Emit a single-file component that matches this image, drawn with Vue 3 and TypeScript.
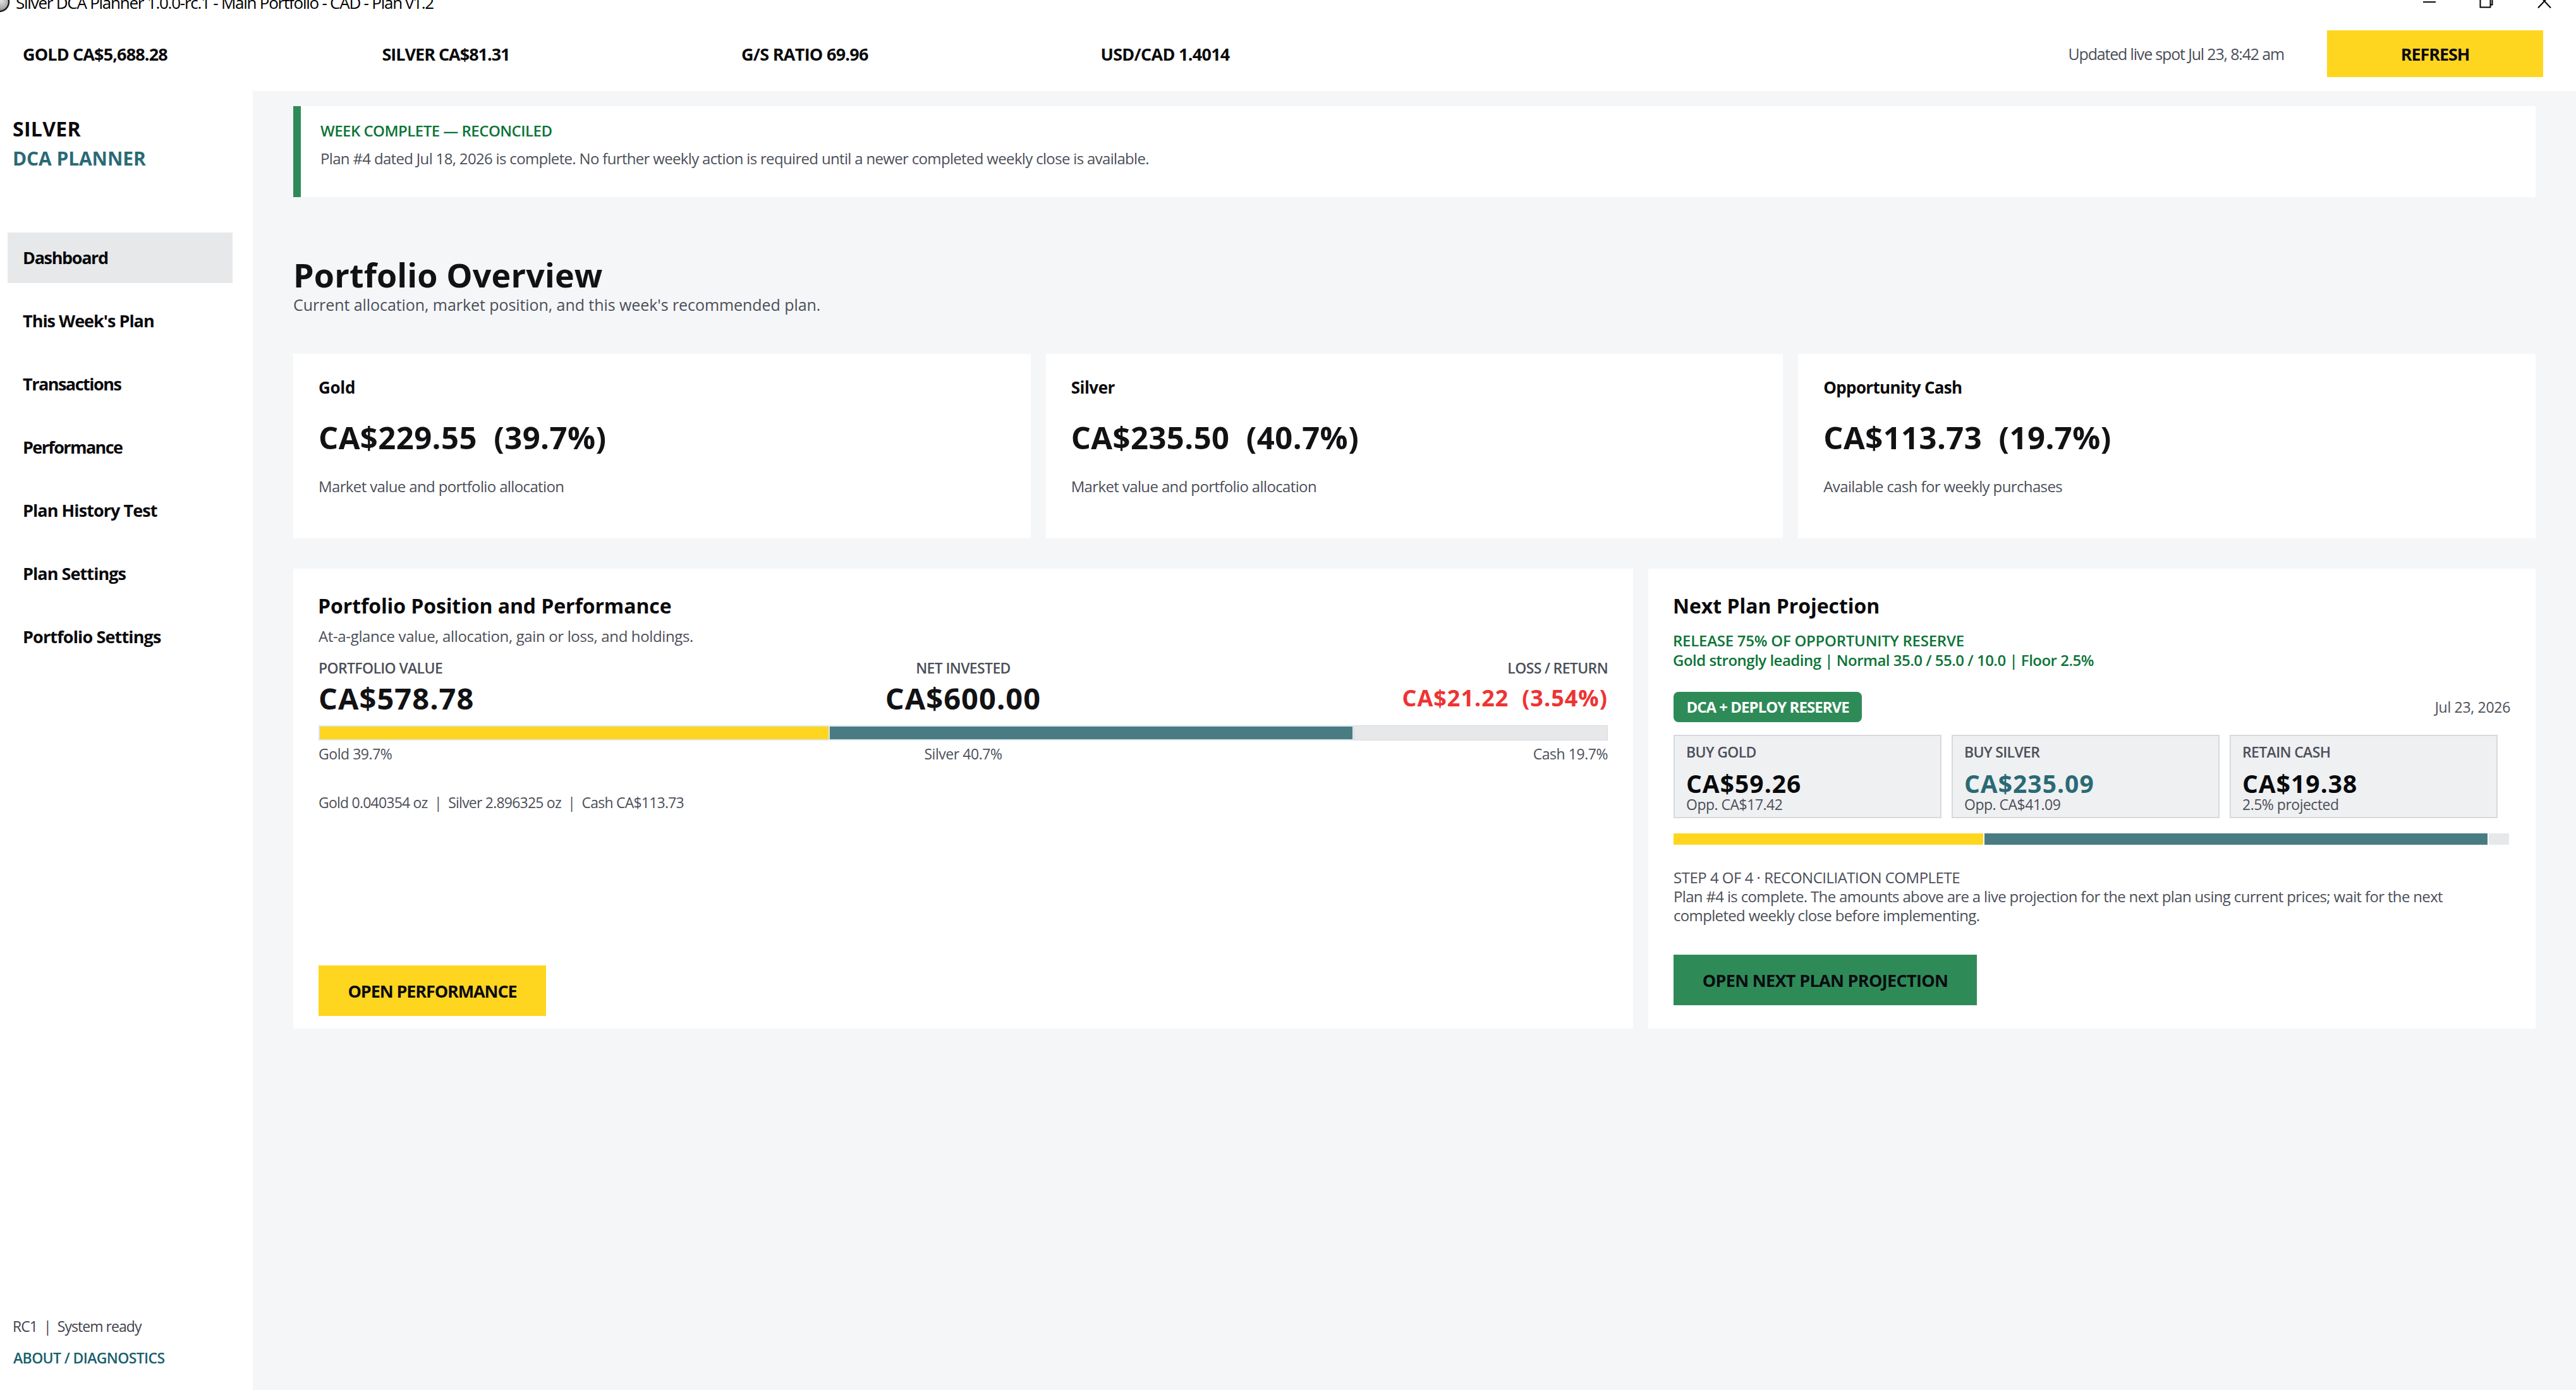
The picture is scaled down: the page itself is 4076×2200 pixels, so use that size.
<script setup lang="ts">
interface Item { text: string; track: number }
interface Segment { kind: 'gold' | 'silver' | 'cash'; share: number }

const quotes: Item[] = [
  { text: 'GOLD CA$5,688.28', track: -0.86 },
  { text: 'SILVER CA$81.31', track: -1.02 },
  { text: 'G/S RATIO 69.96', track: -0.72 },
  { text: 'USD/CAD 1.4014', track: -0.72 },
]

const nav: Item[] = [
  { text: 'Dashboard', track: -1.35 },
  { text: "This Week's Plan", track: -1 },
  { text: 'Transactions', track: -1.5 },
  { text: 'Performance', track: -1.6 },
  { text: 'Plan History Test', track: -0.93 },
  { text: 'Plan Settings', track: -0.93 },
  { text: 'Portfolio Settings', track: -0.86 },
]

const holdings = [
  { name: 'Gold', track: -0.3, value: 'CA$229.55\u00a0 (39.7%)', note: 'Market value and portfolio allocation' },
  { name: 'Silver', track: -0.5, value: 'CA$235.50\u00a0 (40.7%)', note: 'Market value and portfolio allocation' },
  { name: 'Opportunity Cash', track: -0.68, value: 'CA$113.73\u00a0 (19.7%)', note: 'Available cash for weekly purchases' },
]

const purchases = [
  { label: 'BUY GOLD', value: 'CA$59.26', note: 'Opp. CA$17.42', accent: false },
  { label: 'BUY SILVER', value: 'CA$235.09', note: 'Opp. CA$41.09', accent: true },
  { label: 'RETAIN CASH', value: 'CA$19.38', note: '2.5% projected', accent: false },
]

const allocation: Segment[] = [
  { kind: 'gold', share: 806 },
  { kind: 'silver', share: 828 },
  { kind: 'cash', share: 400 },
]
const projection: Segment[] = [
  { kind: 'gold', share: 490 },
  { kind: 'silver', share: 796 },
  { kind: 'cash', share: 32 },
]
</script>

<template>
  <div class="window">
    <header class="top">
      <div class="titlebar">
        <svg class="coin" width="18" height="22" viewBox="0 0 18 22">
          <defs>
            <radialGradient id="coin" cx="0.6" cy="0.45" r="0.6">
              <stop offset="0" stop-color="#e2e2e2" />
              <stop offset="0.65" stop-color="#a9a9a9" />
              <stop offset="1" stop-color="#6d6d6d" />
            </radialGradient>
          </defs>
          <circle cx="-1" cy="3" r="15" fill="url(#coin)" stroke="#1c1c1c" stroke-width="2.4" />
        </svg>
        <span class="title">Silver DCA Planner 1.0.0-rc.1 - Main Portfolio - CAD - Plan v1.2</span>
        <svg class="controls" width="204" height="18" viewBox="0 0 204 18" fill="none" stroke="#000" stroke-width="2">
          <path d="M0 3.2H20" />
          <path d="M90.5 -6V11.5H106.500V-6M109.500 -6V7.500H106.500" />
          <path d="M182 12.500L202 -9M202 12.500L182 -9" />
        </svg>
      </div>
      <div class="ticker">
        <span v-for="q in quotes" :key="q.text" class="quote" :style="{ letterSpacing: q.track + 'px' }">{{ q.text }}</span>
        <span class="updated">Updated live spot Jul 23, 8:42 am</span>
        <button class="btn refresh">REFRESH</button>
      </div>
    </header>

    <div class="body">
      <aside class="side">
        <div class="brand">SILVER</div>
        <div class="brand-sub">DCA PLANNER</div>
        <nav class="nav">
          <a v-for="(n, i) in nav" :key="n.text" :class="['nav-item', { active: i === 0 }]" :style="{ letterSpacing: n.track + 'px' }">{{ n.text }}</a>
        </nav>
        <div class="status">RC1&nbsp; |&nbsp; System ready</div>
        <a class="about">ABOUT / DIAGNOSTICS</a>
      </aside>

      <main class="main">
        <section class="banner">
          <div class="banner-title">WEEK COMPLETE — RECONCILED</div>
          <div class="banner-text">Plan #4 dated Jul 18, 2026 is complete. No further weekly action is required until a newer completed weekly close is available.</div>
        </section>

        <h1>Portfolio Overview</h1>
        <p class="lead">Current allocation, market position, and this week's recommended plan.</p>

        <section class="cards">
          <article v-for="h in holdings" :key="h.name" class="card">
            <div class="card-name" :style="{ letterSpacing: h.track + 'px' }">{{ h.name }}</div>
            <div class="card-value">{{ h.value }}</div>
            <div class="card-note">{{ h.note }}</div>
          </article>
        </section>

        <section class="panels">
          <article class="panel position">
            <h2>Portfolio Position and Performance</h2>
            <p class="hint">At-a-glance value, allocation, gain or loss, and holdings.</p>
            <div class="trio labels">
              <span>PORTFOLIO VALUE</span><span>NET INVESTED</span><span>LOSS / RETURN</span>
            </div>
            <div class="trio values">
              <span>CA$578.78</span><span>CA$600.00</span><span class="loss">CA$21.22&nbsp; (3.54%)</span>
            </div>
            <div class="bar framed">
              <i v-for="s in allocation" :key="s.kind" :class="s.kind" :style="{ flexGrow: s.share }"></i>
            </div>
            <div class="trio shares">
              <span>Gold 39.7%</span><span>Silver 40.7%</span><span>Cash 19.7%</span>
            </div>
            <div class="ounces">Gold 0.040354 oz&nbsp; |&nbsp; Silver 2.896325 oz&nbsp; |&nbsp; Cash CA$113.73</div>
            <button class="btn perf">OPEN PERFORMANCE</button>
          </article>

          <article class="panel next">
            <h2 class="h2-next">Next Plan Projection</h2>
            <div class="signal">
              <div class="release">RELEASE 75% OF OPPORTUNITY RESERVE</div>
              <div>Gold strongly leading | Normal 35.0 / 55.0 / 10.0 | Floor 2.5%</div>
            </div>
            <div class="mode">
              <span class="badge">DCA + DEPLOY RESERVE</span>
              <span class="date">Jul 23, 2026</span>
            </div>
            <div class="boxes">
              <div v-for="p in purchases" :key="p.label" class="box">
                <div class="box-label">{{ p.label }}</div>
                <div :class="['box-value', { accent: p.accent }]">{{ p.value }}</div>
                <div class="box-note">{{ p.note }}</div>
              </div>
            </div>
            <div class="bar slim">
              <i v-for="s in projection" :key="s.kind" :class="s.kind" :style="{ flexGrow: s.share }"></i>
            </div>
            <div class="step">
              <div class="step-title">STEP 4 OF 4 · RECONCILIATION COMPLETE</div>
              <div>Plan #4 is complete. The amounts above are a live projection for the next plan using current prices; wait for the next<br />completed weekly close before implementing.</div>
            </div>
            <button class="btn open-next">OPEN NEXT PLAN PROJECTION</button>
          </article>
        </section>
      </main>
    </div>
  </div>
</template>

<style>
body { margin: 0; background: #fff; }
</style>

<style scoped>
* { box-sizing: border-box; }
h1, h2, p { margin: 0; }
.window {
  width: 4076px; height: 2200px; overflow: hidden;
  display: flex; flex-direction: column;
  font-family: "Open Sans", "Noto Sans", sans-serif;
  color: #0a0a0c; background: #fff; white-space: nowrap;
}
.top { height: 144px; flex: none; }
.titlebar { height: 48px; display: flex; align-items: flex-start; overflow: hidden; }
.coin { flex: none; }
.title { margin: -14px 0 0 7px; font-size: 26px; line-height: 36px; letter-spacing: -1.24px; color: #000; }
.controls { margin-left: auto; margin-right: 38px; }
.ticker { height: 74px; display: flex; align-items: center; padding: 0 52px 0 36px; font-size: 27px; }
.quote { width: 568.5px; font-weight: 700; }
.updated { margin-left: auto; margin-right: 68px; font-size: 25px; letter-spacing: -1.17px; color: #4c4f59; }
.btn {
  border: 0; padding: 0; font-family: inherit; font-size: 27px; font-weight: 700;
  color: #0b0b12; background: #ffd61f; display: block; flex: none;
}
.refresh { width: 342px; height: 74px; letter-spacing: -1.1px; }

.body { flex: 1; display: flex; min-height: 0; }
.side { width: 400px; flex: none; display: flex; flex-direction: column; padding: 40px 0 35px; }
.brand { padding-left: 20px; font-size: 32px; line-height: 40px; font-weight: 700; letter-spacing: 0.3px; }
.brand-sub { padding-left: 20px; margin-top: 7px; font-size: 30px; line-height: 40px; font-weight: 700; letter-spacing: -0.1px; color: #2a6a75; }
.nav { margin: 97px 32px 0 12px; display: flex; flex-direction: column; gap: 20px; }
.nav-item { height: 80px; line-height: 80px; padding-left: 24px; font-size: 27px; font-weight: 700; }
.nav-item.active { background: #e7e8ea; }
.status { margin-top: auto; padding-left: 20px; font-size: 23px; line-height: 32px; letter-spacing: -0.95px; color: #3f424d; }
.about { margin-top: 18px; padding-left: 21px; font-size: 23px; line-height: 32px; font-weight: 600; letter-spacing: -0.62px; color: #17606c; }

.main { flex: 1; background: #f5f6f8; padding: 24px 64px 0 64px; }
.banner { height: 144px; background: #fff; border-left: 12px solid #2e8b57; padding: 23px 0 0 31px; }
.banner-title { font-size: 24px; line-height: 32px; font-weight: 600; letter-spacing: -0.52px; color: #0b7437; }
.banner-text { margin-top: 12px; font-size: 24px; line-height: 32px; letter-spacing: -0.67px; color: #4c4f59; }
h1 { margin-top: 93px; font-size: 52px; line-height: 60px; font-weight: 700; letter-spacing: 0.15px; color: #121214; }
.lead { margin-top: 1px; font-size: 25px; line-height: 32px; letter-spacing: -0.07px; color: #4c4f59; }

.cards { margin-top: 62px; display: grid; grid-template-columns: repeat(3, 1fr); gap: 24px; }
.card { height: 292px; background: #fff; padding: 35px 40px 0; }
.card-name { font-size: 26px; line-height: 36px; font-weight: 700; }
.card-value { margin: 31px 0 32px; font-size: 49px; line-height: 60px; font-weight: 700; letter-spacing: 0.42px; color: #121214; }
.card-note { font-size: 24px; line-height: 32px; letter-spacing: -0.63px; color: #4c4f59; }

.panels { margin-top: 48px; display: grid; grid-template-columns: 2120px 1404px; gap: 24px; }
.panel { height: 728px; background: #fff; padding: 39px 40px 20px; display: flex; flex-direction: column; }
h2 { font-size: 32px; line-height: 40px; font-weight: 700; letter-spacing: -0.1px; margin-left: -1px; }
.h2-next { letter-spacing: -0.05px; }
.hint { margin-top: 12px; font-size: 24px; line-height: 32px; letter-spacing: -0.36px; color: #4c4f59; }
.trio { display: flex; }
.trio > span { flex: 1; }
.trio > span:nth-child(2) { text-align: center; }
.trio > span:nth-child(3) { text-align: right; }
.labels { margin-top: 18px; font-size: 23px; line-height: 32px; font-weight: 600; letter-spacing: -0.65px; color: #4c4f59; }
.values { margin-top: 8px; font-size: 47px; line-height: 48px; font-weight: 700; letter-spacing: 1.05px; color: #121214; }
.values .loss { font-size: 36px; line-height: 47px; letter-spacing: 1px; color: #ef3333; }
.bar { display: flex; gap: 2px; flex: none; }
.bar i { display: block; flex-basis: 0; }
.framed { margin-top: 19px; height: 24px; padding: 2px 0 2px 2px; background: #dbe6f0; }
.framed .cash { margin: -2px 0; border: 1px solid #d9dadd; }
.gold { background: #ffd61f; }
.silver { background: #487c82; }
.cash { background: #e7e8ea; }
.shares { margin-top: 5px; font-size: 23px; line-height: 32px; letter-spacing: -0.45px; color: #4c4f59; }
.ounces { margin-top: 45px; font-size: 23px; line-height: 32px; letter-spacing: -0.78px; color: #4c4f59; }
.perf { margin-top: auto; width: 360px; height: 80px; letter-spacing: -1.12px; }

.signal { margin: 20px 0 0 -1px; font-size: 24px; line-height: 30.5px; font-weight: 600; letter-spacing: -0.5px; color: #0b7437; }
.release { letter-spacing: -0.25px; }
.mode { margin-top: 35px; display: flex; align-items: center; justify-content: space-between; }
.badge { width: 298px; height: 48px; line-height: 47px; border-radius: 8px; background: #2e8b57; color: #fff; text-align: center; font-size: 24px; font-weight: 700; letter-spacing: -0.98px; }
.date { font-size: 23px; letter-spacing: -0.3px; color: #4c4f59; }
.boxes { margin-top: 20px; display: flex; gap: 16px; }
.box { width: 424px; height: 132px; border: 2px solid #d8d9dd; background: #eff0f2; padding: 9px 0 0 18px; }
.box-label { font-size: 23px; line-height: 32px; font-weight: 600; letter-spacing: -0.65px; color: #4c4f59; }
.box-value { margin-top: 15px; font-size: 39px; line-height: 38px; font-weight: 700; letter-spacing: 1px; }
.box-value.accent { color: #2a6a75; }
.box-note { margin-top: 3px; font-size: 23px; line-height: 22px; letter-spacing: -0.5px; color: #4c4f59; }
.slim { margin-top: 24px; margin-right: 2px; height: 18px; }
.step { margin-top: 37px; font-size: 24px; line-height: 30px; letter-spacing: -0.66px; color: #4c4f59; }
.step-title { letter-spacing: -0.5px; }
.open-next { margin-top: 47px; width: 480px; height: 80px; background: #2e8b57; letter-spacing: -0.68px; }
</style>
